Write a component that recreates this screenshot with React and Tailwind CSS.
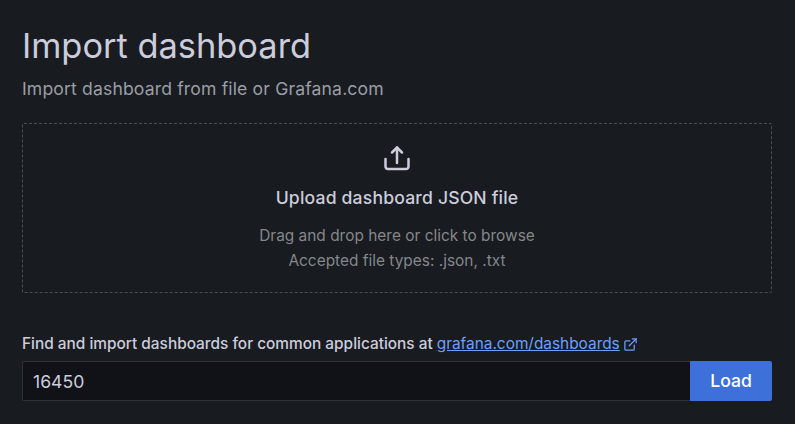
import { useState } from 'react';

export default function App() {
  const [dashboardId, setDashboardId] = useState('16450');

  return (
    <div className="h-[424px] w-[795px] overflow-hidden bg-[#181b1f] px-[22px] pt-[23px] font-['Inter',sans-serif] text-[#ccccdc]">
      <h1 className="text-[34.4px] leading-[45px] font-normal text-[#ccccdc]">Import dashboard</h1>
      <p className="mt-[9px] text-[17.6px] leading-[24px] tracking-[0.14px] text-[#9b9ea5]">Import dashboard from file or Grafana.com</p>

      <div className="mt-[22px] flex h-[170px] w-[750px] flex-col items-center rounded-[2px] border border-dashed border-[#4b4d52] pt-[19px]">
        <svg width="32" height="32" viewBox="0 0 32 32" fill="none" stroke="#ccccdc" strokeWidth="2.5" strokeLinecap="round" strokeLinejoin="round">
          <path d="M4.5 16v7.5a2.5 2.5 0 0 0 2.5 2.5h18a2.5 2.5 0 0 0 2.5-2.5V16" />
          <path d="M16 20V4.5" />
          <path d="M11 9.5l5-5 5 5" />
        </svg>
        <div className="mt-[11px] text-[17.6px] leading-[24px] font-medium tracking-[0.17px] text-[#ccccdc]">Upload dashboard JSON file</div>
        <div className="mt-[13px] text-center text-[15.4px] leading-[25px] tracking-[0.02px] text-[#85878c]">
          <div>Drag and drop here or click to browse</div>
          <div>Accepted file types: .json, .txt</div>
        </div>
      </div>

      <div className="mt-[40px] flex h-[22px] items-center text-[15.4px] font-medium text-[#ccccdc]">
        <span>Find and import dashboards for common applications at</span>
        <a href="#" className="ml-[4px] font-normal text-[#6e9fff] underline">grafana.com/dashboards</a>
        <svg className="ml-[3px]" width="15" height="15" viewBox="0 0 24 24" fill="none" stroke="#6e9fff" strokeWidth="2" strokeLinecap="round" strokeLinejoin="round">
          <path d="M18 13v6a2 2 0 0 1-2 2H5a2 2 0 0 1-2-2V8a2 2 0 0 1 2-2h6" />
          <path d="M15 3h6v6" />
          <path d="M10 14 21 3" />
        </svg>
      </div>

      <div className="mt-[6px] flex h-[40px] w-[750px]">
        <input
          value={dashboardId}
          onChange={(event) => {
            setDashboardId(event.target.value);
          }}
          className="h-full min-w-0 flex-1 rounded-l-[2px] border border-r-0 border-[#2f3136] bg-[#111217] px-[10px] text-[17.6px] text-[#ccccdc] outline-none"
        />
        <button className="h-full w-[82px] rounded-r-[2px] bg-[#3d71d9] text-[17.6px] font-medium text-white">Load</button>
      </div>
    </div>
  );
}
